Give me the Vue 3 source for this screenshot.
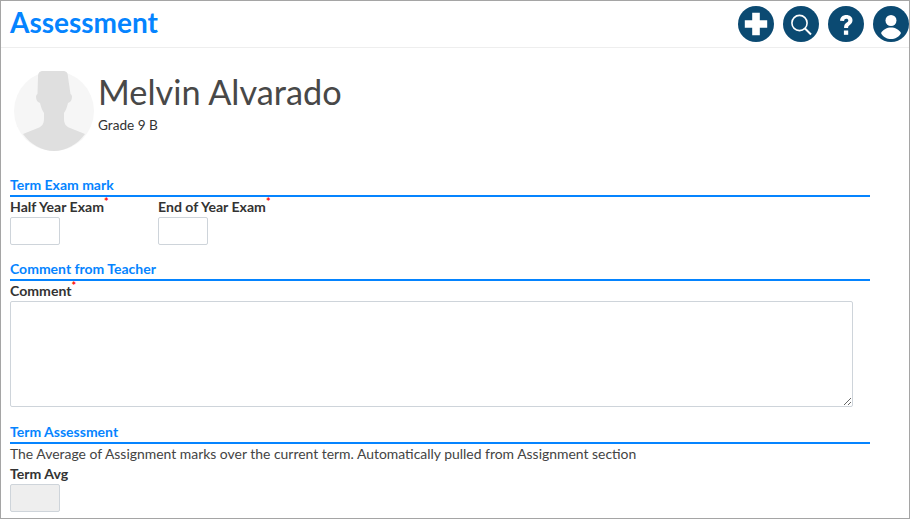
<script setup>
const exams = ['Half Year Exam', 'End of Year Exam']
</script>

<template>
  <div class="page">
    <header class="topbar">
      <h1 class="page-title">Assessment</h1>
      <div class="actions">
        <button class="round-btn" aria-label="Add">
          <svg viewBox="0 0 36 36" width="36" height="36">
            <path d="M14.200 6.800h7.600v7.400h7.400v7.600h-7.400v7.400h-7.600v-7.400H6.800v-7.600h7.400z" fill="#fff" />
          </svg>
        </button>
        <button class="round-btn" aria-label="Search">
          <svg viewBox="0 0 36 36" width="36" height="36" fill="none" stroke="#fff">
            <circle cx="16.500" cy="17" r="7.600" stroke-width="1.600" />
            <path d="M22 22.500l6 6" stroke-width="2" />
          </svg>
        </button>
        <button class="round-btn" aria-label="Help">
          <svg viewBox="0 0 36 36" width="36" height="36" fill="#fff">
            <g transform="translate(0 1.500)">
              <path d="M12 13.200c.3-3.600 2.800-5.700 6.300-5.700 3.600 0 6.200 2.100 6.200 5.300 0 2.300-1.200 3.500-2.700 4.600-1.300 1-1.700 1.500-1.700 3.100h-4c-.1-2.700.6-3.900 2.300-5.200 1.200-.9 1.900-1.400 1.900-2.400 0-1-.8-1.700-2-1.700-1.300 0-2.100.8-2.200 2.200z" />
              <rect x="15.900" y="23" width="4.300" height="4.300" />
            </g>
          </svg>
        </button>
        <button class="round-btn" aria-label="Profile">
          <svg viewBox="0 0 36 36" width="36" height="36" fill="#fff">
            <circle cx="18" cy="14.500" r="5.500" />
            <path d="M8 27c2-3.500 6-5.500 10-5.500s8 2 10 5.500c-2 4-6 6-10 6s-8-2-10-6z" />
          </svg>
        </button>
      </div>
    </header>

    <main class="content">
      <div class="student">
        <svg class="avatar" viewBox="0 0 80 80" width="80" height="80">
          <circle cx="40" cy="40" r="40" fill="#f6f6f6" />
          <path d="M9 63l15-6c5-2 6-5 6-10v-5c-2-3-3-6-4-10-2-.5-4-2.500-4-6 0-1.500.5-2.500 1.500-3L24 6c0-4 1.500-6 5-6h20c3.500 0 5 2 5 6l2.500 17c1 .5 1.500 1.500 1.500 3 0 3.500-2 5.500-4 6-1 4-2 7-4 10v5c0 5 1 8 6 10l15 6c-7 10-19 17-31 17S16 73 9 63z" fill="#dfdfdf" />
        </svg>
        <div class="student-info">
          <div class="student-name">Melvin Alvarado</div>
          <div class="student-grade">Grade 9 B</div>
        </div>
      </div>

      <section class="exam-section">
        <h2 class="section-title">Term Exam mark</h2>
        <div class="exam-row">
          <div v-for="exam in exams" :key="exam" class="exam-field">
            <label class="field-label">{{ exam }}<sup class="req">*</sup></label>
            <input class="small-input" type="text" />
          </div>
        </div>
      </section>

      <section class="comment-section">
        <h2 class="section-title">Comment from Teacher</h2>
        <label class="field-label">Comment<sup class="req">*</sup></label>
        <textarea class="comment-box"></textarea>
      </section>

      <section class="term-section">
        <h2 class="section-title">Term Assessment</h2>
        <p class="term-note">The Average of Assignment marks over the current term. Automatically pulled from Assignment section</p>
        <label class="field-label">Term Avg</label>
        <input class="small-input" type="text" disabled />
      </section>
    </main>
  </div>
</template>

<style>
html,
body {
  margin: 0;
  background: #fff;
}
</style>

<style scoped>
.page {
  box-sizing: border-box;
  width: 910px;
  height: 519px;
  border: 1px solid #a5a5a5;
  overflow: hidden;
  font-family: Lato, "Liberation Sans", sans-serif;
  color: #333;
  background: #fff;
}

.topbar {
  display: flex;
  align-items: center;
  justify-content: space-between;
  box-sizing: border-box;
  height: 47px;
  padding: 0 0 0 9px;
  border-bottom: 1px solid #eeeeee;
}

.page-title {
  margin: -4px 0 0;
  font-size: 28px;
  font-weight: 700;
  color: #0584ff;
}

.actions {
  display: flex;
  gap: 9px;
}

.round-btn {
  width: 36px;
  height: 36px;
  padding: 0;
  border: 0;
  border-radius: 50%;
  background: #0b4a72;
}

.round-btn svg {
  display: block;
}

.content {
  padding: 23px 0 0 9px;
}

.student {
  display: flex;
  gap: 4px;
  margin-left: 4px;
}

.student-name {
  font-size: 34.300px;
  line-height: 42px;
  color: #484848;
}

.student-grade {
  margin-top: 4px;
  font-size: 13.600px;
  line-height: 16px;
  color: #333;
}

.section-title {
  width: 860px;
  margin: 0;
  border-bottom: 2px solid #0584ff;
  font-size: 14px;
  font-weight: 700;
  line-height: 20px;
  color: #0584ff;
}

.exam-section {
  margin-top: 24px;
}

.exam-row {
  display: flex;
}

.exam-field {
  width: 148px;
}

.field-label {
  display: block;
  height: 20px;
  font-size: 14.100px;
  font-weight: 700;
  line-height: 20px;
  color: #333;
  white-space: nowrap;
}

.req {
  color: #f00;
  font-size: 11px;
  line-height: 0;
}

.small-input {
  display: block;
  box-sizing: border-box;
  width: 50px;
  height: 28px;
  border: 1px solid #ced4da;
  border-radius: 2px;
  background: #fff;
}

.small-input:disabled {
  background: #eeeeee;
}

.comment-section {
  margin-top: 14px;
}

.comment-box {
  display: block;
  box-sizing: border-box;
  width: 843px;
  height: 106px;
  border: 1px solid #ced4da;
  border-radius: 2px;
}

.term-section {
  margin-top: 15px;
}

.term-note {
  margin: 0;
  font-size: 13.930px;
  line-height: 20px;
  color: #444;
}
</style>
